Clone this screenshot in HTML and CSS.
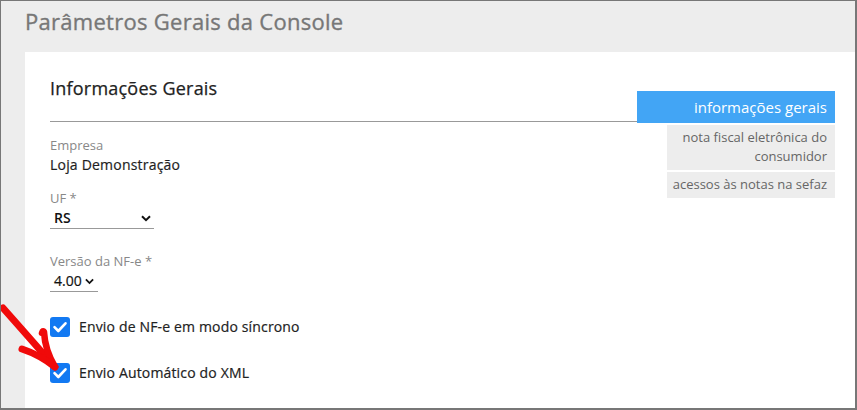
FILE: index.html
```html
<!DOCTYPE html>
<html lang="pt-BR">
<head>
<meta charset="utf-8">
<title>Parâmetros Gerais da Console</title>
<link rel="stylesheet" href="styles.css">
</head>
<body>
<div class="frame">
  <header class="page-header">
    <h1 class="page-title">Parâmetros Gerais da Console</h1>
  </header>
  <main class="card">
    <div class="main-col">
      <h2 class="section-title">Informações Gerais</h2>
      <div class="form">
        <div class="field field-text">
          <div class="label">Empresa</div>
          <div class="value">Loja Demonstração</div>
        </div>
        <div class="field field-select">
          <div class="label">UF *</div>
          <div class="select select-uf">
            <span class="select-text">RS</span>
            <svg class="chev" viewBox="0 0 10 7" width="10" height="7"><path d="M1 1.2 L5 5.2 L9 1.2" fill="none" stroke="#111" stroke-width="2"/></svg>
          </div>
        </div>
        <div class="field field-last">
          <div class="label">Versão da NF-e *</div>
          <div class="select select-ver">
            <span class="select-text">4.00</span>
            <svg class="chev" viewBox="0 0 10 7" width="9" height="7"><path d="M1 1.2 L5 5.2 L9 1.2" fill="none" stroke="#111" stroke-width="2"/></svg>
          </div>
        </div>
        <label class="check">
          <span class="box"><svg viewBox="0 0 20 20" width="20" height="20"><path d="M4.5 10.2 L8.3 14 L15.5 6.3" fill="none" stroke="#fff" stroke-width="2.6" stroke-linecap="round" stroke-linejoin="round"/></svg></span>
          <span class="check-text">Envio de NF-e em modo síncrono</span>
        </label>
        <label class="check">
          <span class="box"><svg viewBox="0 0 20 20" width="20" height="20"><path d="M4.5 10.2 L8.3 14 L15.5 6.3" fill="none" stroke="#fff" stroke-width="2.6" stroke-linecap="round" stroke-linejoin="round"/></svg></span>
          <span class="check-text">Envio Automático do XML</span>
        </label>
        <div class="next-row"><span class="dot"></span></div>
      </div>
    </div>
    <nav class="side-nav">
      <a class="tab tab-active">informações gerais</a>
      <a class="tab tab-sub">nota fiscal eletrônica do consumidor</a>
      <a class="tab tab-sub">acessos às notas na sefaz</a>
    </nav>
  </main>
  <svg class="arrow" viewBox="0 0 75 90" width="75" height="90">
    <g fill="none" stroke="#f00a0a" stroke-linecap="round" stroke-linejoin="round">
      <path d="M3 13 Q27 40 54 71" stroke-width="7"/>
      <path d="M42 38 Q43 35 44 37 Q45 55 55 72" stroke-width="6.5"/>
      <path d="M22 54 Q40 60 55 72" stroke-width="7"/>
    </g>
  </svg>
</div>
</body>
</html>
```

FILE: styles.css
```css
* { box-sizing: border-box; }
html, body { margin: 0; padding: 0; }
body {
  font-family: "Open Sans", "Noto Sans", "Liberation Sans", sans-serif;
  background: #fff;
}
.frame {
  position: relative;
  width: 857px;
  height: 410px;
  overflow: hidden;
  background: #ededed;
  border-top: 1px solid #777;
  border-left: 1px solid #777;
  border-right: 2px solid #777;
  border-bottom: 2px solid #777;
  display: flex;
  flex-direction: column;
}
.page-header {
  height: 51px;
  padding-left: 24px;
  flex: none;
}
.page-title {
  margin: 0;
  padding-top: 5px;
  font-size: 22px;
  line-height: 30px;
  font-weight: 400;
  letter-spacing: 0.28px;
  -webkit-text-stroke: 0.35px #777;
  color: #777;
}
.card {
  flex: 1;
  margin-left: 24px;
  background: #fff;
  padding: 0 20px 0 25px;
  display: grid;
  grid-template-columns: 1fr 198px;
  align-items: start;
}
.section-title {
  margin: 0;
  padding: 24px 0 20px;
  font-size: 18px;
  line-height: 25px;
  font-weight: 400;
  letter-spacing: 0.22px;
  -webkit-text-stroke: 0.25px #222;
  color: #222;
  border-bottom: 1px solid #999;
}
.form {
  padding-top: 14px;
}
.field-text { margin-bottom: 14px; }
.field-select { margin-bottom: 23px; }
.field-last { margin-bottom: 0; }
.label {
  font-size: 13px;
  line-height: 19px;
  color: #888;
}
.value {
  font-size: 14px;
  line-height: 20px;
  color: #1e1e1e;
  letter-spacing: 0.2px;
  -webkit-text-stroke: 0.2px #1e1e1e;
}
.select {
  display: flex;
  align-items: center;
  justify-content: space-between;
  height: 21px;
  padding: 0 3px 0 4px;
  border-bottom: 1px solid #999;
}
.select-uf { width: 104px; }
.select-ver {
  width: 48px;
  justify-content: flex-start;
  gap: 3px;
}
.select-text {
  font-size: 14px;
  line-height: 20px;
  color: #111;
  font-weight: 600;
}
.select-ver .select-text { font-weight: 400; -webkit-text-stroke: 0.2px #111; }
.chev { display: block; }
.check {
  display: flex;
  align-items: center;
  gap: 9px;
  height: 20px;
  margin-top: 25px;
}
.check + .check { margin-top: 26px; }
.box {
  width: 20px;
  height: 20px;
  border-radius: 3px;
  background: #1279f2;
  display: block;
}
.box svg { display: block; }
.check-text {
  font-size: 14px;
  line-height: 20px;
  color: #222;
  letter-spacing: 0.16px;
  -webkit-text-stroke: 0.2px #222;
}
.next-row {
  padding-left: 190px;
  padding-top: 25px;
}
.dot {
  display: block;
  width: 8px;
  height: 8px;
  border-radius: 50%;
  background: #42a5f5;
}
.side-nav {
  margin-top: 39px;
  display: flex;
  flex-direction: column;
  align-items: flex-end;
  gap: 2px;
}
.tab {
  display: block;
  text-align: right;
  padding: 0 8px 0 4px;
}
.tab-active {
  width: 198px;
  height: 32px;
  background: #42a5f5;
  color: #fff;
  font-size: 15px;
  line-height: 32px;
}
.tab-sub {
  width: 168px;
  background: #ededed;
  color: #666;
  font-size: 13px;
  line-height: 19px;
  padding-top: 3px;
  padding-bottom: 4px;
}
.arrow {
  position: absolute;
  left: -1px;
  top: 294px;
}
```
